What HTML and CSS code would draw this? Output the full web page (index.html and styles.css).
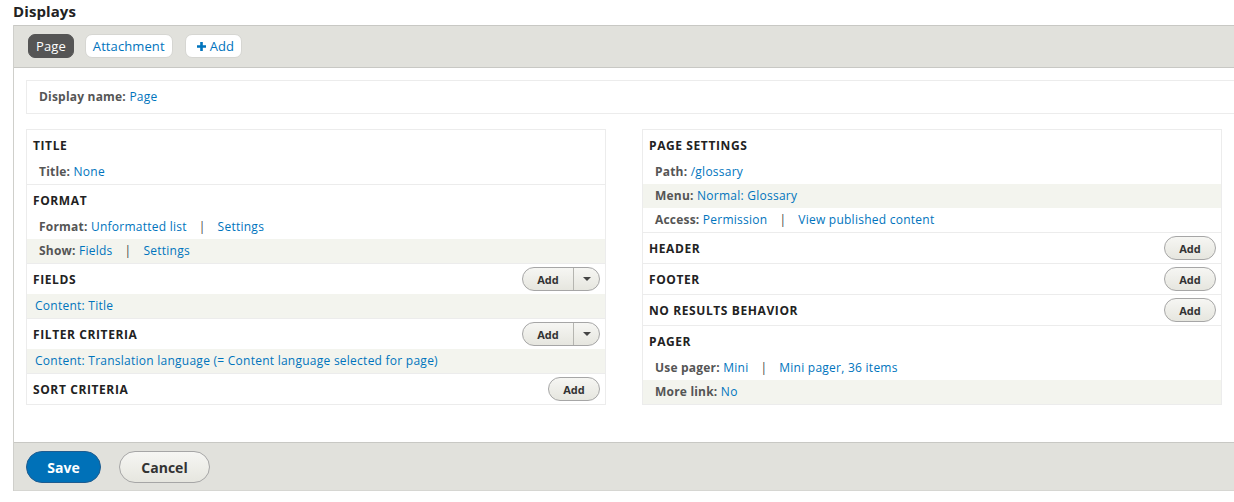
FILE: index.html
```html
<!DOCTYPE html>
<html lang="en">
<head>
<meta charset="utf-8">
<title>Displays</title>
<link rel="stylesheet" href="styles.css">
</head>
<body>
<div class="page">
  <h1 class="page-title">Displays</h1>
  <div class="display-box">
    <div class="tab-bar">
      <a class="tab is-active" href="#">Page</a>
      <a class="tab" href="#">Attachment</a>
      <a class="tab tab-add" href="#"><svg class="plus" width="9" height="9" viewBox="0 0 9 9"><path d="M3.2 0h2.6v3.2H9v2.6H5.8V9H3.2V5.8H0V3.2h3.2z" fill="#0074bd"/></svg>Add</a>
    </div>
    <div class="display-content">
      <div class="display-name"><span class="label">Display name:</span> <a href="#">Page</a></div>
      <div class="columns">
        <div class="column">
          <section class="bucket">
            <div class="bucket-head"><span class="bucket-title">Title</span></div>
            <div class="row"><span class="label">Title:</span> <a href="#">None</a></div>
          </section>
          <section class="bucket">
            <div class="bucket-head"><span class="bucket-title">Format</span></div>
            <div class="row"><span class="label">Format:</span> <a href="#">Unformatted list</a><span class="sep">|</span><a href="#">Settings</a></div>
            <div class="row row-alt"><span class="label">Show:</span> <a href="#">Fields</a><span class="sep">|</span><a href="#">Settings</a></div>
          </section>
          <section class="bucket">
            <div class="bucket-head"><span class="bucket-title">Fields</span>
              <div class="dropbutton"><span class="drop-main">Add</span><span class="drop-toggle"><span class="caret"></span></span></div>
            </div>
            <div class="row row-alt row-field"><a href="#">Content: Title</a></div>
          </section>
          <section class="bucket">
            <div class="bucket-head"><span class="bucket-title">Filter criteria</span>
              <div class="dropbutton"><span class="drop-main">Add</span><span class="drop-toggle"><span class="caret"></span></span></div>
            </div>
            <div class="row row-alt row-field"><a href="#">Content: Translation language (= Content language selected for page)</a></div>
          </section>
          <section class="bucket">
            <div class="bucket-head"><span class="bucket-title">Sort criteria</span>
              <button class="btn-small">Add</button>
            </div>
          </section>
        </div>
        <div class="column">
          <section class="bucket">
            <div class="bucket-head"><span class="bucket-title">Page settings</span></div>
            <div class="row"><span class="label">Path:</span> <a href="#">/glossary</a></div>
            <div class="row row-alt"><span class="label">Menu:</span> <a href="#">Normal: Glossary</a></div>
            <div class="row"><span class="label">Access:</span> <a href="#">Permission</a><span class="sep">|</span><a href="#">View published content</a></div>
          </section>
          <section class="bucket">
            <div class="bucket-head"><span class="bucket-title">Header</span><button class="btn-small">Add</button></div>
          </section>
          <section class="bucket">
            <div class="bucket-head"><span class="bucket-title">Footer</span><button class="btn-small">Add</button></div>
          </section>
          <section class="bucket">
            <div class="bucket-head"><span class="bucket-title">No results behavior</span><button class="btn-small">Add</button></div>
          </section>
          <section class="bucket">
            <div class="bucket-head"><span class="bucket-title">Pager</span></div>
            <div class="row"><span class="label">Use pager:</span> <a href="#">Mini</a><span class="sep">|</span><a href="#">Mini pager, 36 items</a></div>
            <div class="row row-alt"><span class="label">More link:</span> <a href="#">No</a></div>
          </section>
        </div>
      </div>
    </div>
    <div class="actions">
      <button class="btn btn-primary">Save</button>
      <button class="btn">Cancel</button>
    </div>
  </div>
</div>
</body>
</html>
```

FILE: styles.css
```css
html, body {
  margin: 0;
  padding: 0;
  background: #fff;
  overflow: hidden;
}
body {
  font-family: "Open Sans", "Noto Sans", sans-serif;
  font-size: 12px;
  color: #333;
  letter-spacing: 0.25px;
}
a {
  color: #0074bd;
  text-decoration: none;
}
.page {
  padding-left: 13px;
  width: 1260px;
}
.page-title {
  margin: 0;
  padding: 2px 0 5px;
  font-size: 15px;
  line-height: 18px;
  font-weight: bold;
  color: #222;
  letter-spacing: 0.1px;
}
.display-box {
  border-left: 1px solid #cfcfcb;
}
.tab-bar {
  display: flex;
  gap: 11px;
  background: #e1e1dc;
  border-top: 1px solid #c8c8c4;
  border-bottom: 1px solid #c8c8c4;
  padding: 8px 14px 9px;
}
.tab {
  display: flex;
  align-items: center;
  height: 24px;
  box-sizing: border-box;
  padding: 0 7px;
  border: 1px solid #d6d6d2;
  border-radius: 7px;
  background: #fff;
  font-size: 13px;
  color: #0074bd;
  letter-spacing: 0.1px;
}
.tab.is-active {
  background: #555;
  border-color: #555;
  color: #fff;
}
.tab-add {
  gap: 4px;
  padding: 0 7px 0 11px;
  margin-left: 1px;
}
.display-content {
  padding: 12px 0 37px 12px;
}
.display-name {
  border: 1px solid #ececec;
  border-right: 0;
  height: 34px;
  box-sizing: border-box;
  line-height: 32px;
  padding: 0 12px;
  margin-bottom: 15px;
}
.label {
  font-weight: bold;
  color: #555;
  letter-spacing: 0.2px;
}
.columns {
  display: flex;
  gap: 36px;
  align-items: flex-start;
}
.column {
  width: 580px;
  box-sizing: border-box;
  border: 1px solid #ececec;
}
.bucket + .bucket {
  border-top: 1px solid #ececec;
}
.bucket-head {
  height: 30px;
  box-sizing: border-box;
  display: flex;
  align-items: center;
  justify-content: space-between;
  padding: 0 5px 0 6px;
}
.bucket-title {
  font-weight: bold;
  text-transform: uppercase;
  color: #222;
  letter-spacing: 0.6px;
}
.row {
  height: 24px;
  line-height: 24px;
  padding: 0 12px;
}
.row-alt {
  background: #f3f4ee;
}
.row-field {
  padding-left: 8px;
}
.sep {
  margin: 0 12px;
  color: #444;
}
.btn-small,
.dropbutton {
  height: 24px;
  box-sizing: border-box;
  border: 1px solid #a6a6a6;
  border-radius: 12px;
  background: linear-gradient(#f6f6f3, #e6e6df);
  font-family: inherit;
  font-size: 11px;
  font-weight: bold;
  color: #333;
  letter-spacing: 0;
}
.btn-small {
  width: 52px;
  padding: 0;
}
.dropbutton {
  display: flex;
  width: 78px;
}
.drop-main {
  width: 50px;
  display: flex;
  align-items: center;
  justify-content: center;
  border-right: 1px solid #b5b5b0;
}
.drop-toggle {
  flex: 1;
  display: flex;
  align-items: center;
  justify-content: center;
}
.caret {
  width: 0;
  height: 0;
  border-left: 4px solid transparent;
  border-right: 4px solid transparent;
  border-top: 4px solid #444;
}
.actions {
  display: flex;
  gap: 18px;
  background: #e1e1dc;
  border-top: 1px solid #c8c8c4;
  border-bottom: 1px solid #d6d6d2;
  padding: 8px 12px 7px;
}
.btn {
  height: 32px;
  box-sizing: border-box;
  border: 1px solid #a6a6a6;
  border-radius: 16px;
  background: linear-gradient(#f6f6f3, #e6e6df);
  font-family: inherit;
  font-size: 14px;
  font-weight: bold;
  color: #333;
  width: 91px;
  padding: 0;
  letter-spacing: 0;
}
.btn-primary {
  width: 75px;
  background: #0071b8;
  border-color: #1e5c90;
  color: #fff;
}
```
